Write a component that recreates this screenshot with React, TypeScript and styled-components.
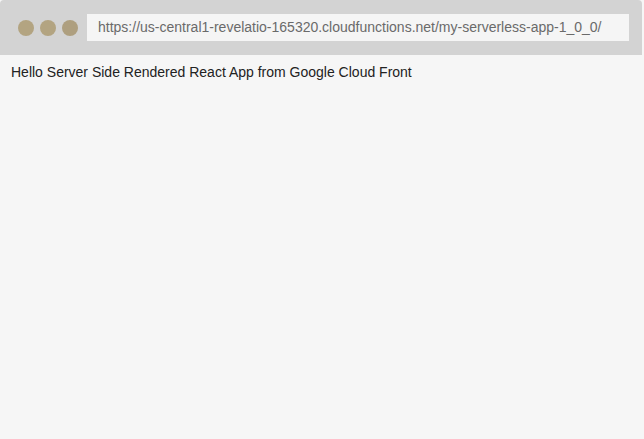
import React from "react";
import styled, { createGlobalStyle } from "styled-components";

const Global = createGlobalStyle`
  html, body { margin: 0; padding: 0; background: #f6f6f6; }
  body { width: 644px; height: 439px; overflow: hidden; font-family: "Liberation Sans", Arial, sans-serif; }
`;

const Window = styled.div`
  width: 642px;
  height: 439px;
  background: #f6f6f6;
  border-top-left-radius: 4px;
  border-top-right-radius: 4px;
  overflow: hidden;
  display: flex;
  flex-direction: column;
`;

const TitleBar = styled.div`
  height: 55px;
  background: #d3d3d3;
  display: flex;
  align-items: center;
  padding: 0 13px 0 18px;
  box-sizing: border-box;
`;

const Dots = styled.div`
  display: flex;
  gap: 6px;
  margin-right: 9px;
`;

const Dot = styled.span<{ $faded?: boolean }>`
  width: 16px;
  height: 16px;
  border-radius: 50%;
  background: ${(p) => (p.$faded ? "#ae9f7f" : "#b3a481")};
`;

const Address = styled.div`
  flex: 1;
  height: 27px;
  background: #f5f5f5;
  display: flex;
  align-items: center;
  padding-left: 11px;
  font-size: 14px;
  color: #6a6a6a;
  margin-top: -1px;
`;

const Content = styled.div`
  padding: 9px 11px;
  font-size: 14px;
  color: #222;
`;

export default function App() {
  return (
    <>
      <Global />
      <Window>
        <TitleBar>
          <Dots>
            <Dot />
            <Dot />
            <Dot $faded />
          </Dots>
          <Address>https://us-central1-revelatio-165320.cloudfunctions.net/my-serverless-app-1_0_0/</Address>
        </TitleBar>
        <Content>Hello Server Side Rendered React App from Google Cloud Front</Content>
      </Window>
    </>
  );
}
